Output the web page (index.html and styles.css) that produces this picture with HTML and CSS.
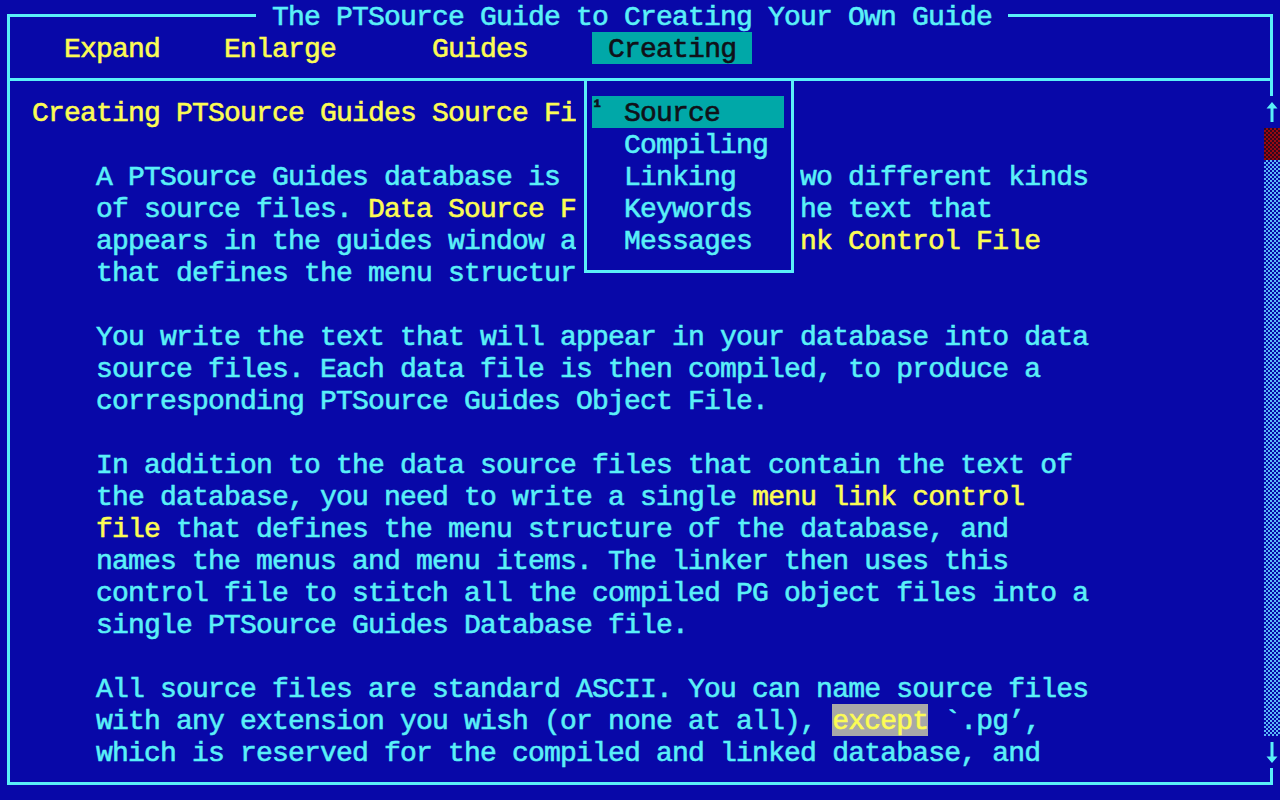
FILE: index.html
```html
<!DOCTYPE html>
<html>
<head>
<meta charset="utf-8">
<link rel="stylesheet" href="styles.css">
</head>
<body>
<div class="screen">
  <div class="frame">
    <div class="menubar"><div class="menuline"> Expand    Enlarge      Guides    <span class="menu-hl"> <span class="hl-text">Creating</span> </span></div></div>
    <div class="body">
      <div class="line heading">Creating PTSource Guides Source Fi</div>
      <div class="line"></div>
      <div class="line para split"><span class="seg">A PTSource Guides database is </span><span class="gap"></span><span class="seg">wo different kinds</span></div>
      <div class="line para split"><span class="seg">of source files. <span class="y">Data Source F</span></span><span class="gap"></span><span class="seg">he text that</span></div>
      <div class="line para split"><span class="seg">appears in the guides window a</span><span class="gap"></span><span class="seg y">nk Control File</span></div>
      <div class="line para">that defines the menu structur</div>
      <div class="line"></div>
      <div class="line para">You write the text that will appear in your database into data</div>
      <div class="line para">source files. Each data file is then compiled, to produce a</div>
      <div class="line para">corresponding PTSource Guides Object File.</div>
      <div class="line"></div>
      <div class="line para">In addition to the data source files that contain the text of</div>
      <div class="line para">the database, you need to write a single <span class="y">menu link control</span></div>
      <div class="line para"><span class="y">file</span> that defines the menu structure of the database, and</div>
      <div class="line para">names the menus and menu items. The linker then uses this</div>
      <div class="line para">control file to stitch all the compiled PG object files into a</div>
      <div class="line para">single PTSource Guides Database file.</div>
      <div class="line"></div>
      <div class="line para">All source files are standard ASCII. You can name source files</div>
      <div class="line para">with any extension you wish (or none at all), <span class="mark">except</span> `.pg’,</div>
      <div class="line para">which is reserved for the compiled and linked database, and</div>
    </div>
  </div>

  <div class="title"> The PTSource Guide to Creating Your Own Guide </div>

  <div class="dropdown">
    <div class="dd-box">
      <div class="dd-item active"><span class="sup">¹</span> Source</div>
      <div class="dd-item">  Compiling</div>
      <div class="dd-item">  Linking</div>
      <div class="dd-item">  Keywords</div>
      <div class="dd-item">  Messages</div>
    </div>
  </div>

  <div class="scrollbar">
    <div class="sb-cell">
      <svg width="16" height="32" viewBox="0 0 16 32"><path d="M8 6 L13.5 12.5 L9.5 12.5 L9.5 26 L6.5 26 L6.5 12.5 L2.5 12.5 Z" fill="#5af0f8"/></svg>
    </div>
    <div class="sb-thumb"></div>
    <div class="sb-track"></div>
    <div class="sb-cell">
      <svg width="16" height="32" viewBox="0 0 16 32"><path d="M8 27 L13.5 20.5 L9.5 20.5 L9.5 6 L6.5 6 L6.5 20.5 L2.5 20.5 Z" fill="#5af0f8"/></svg>
    </div>
  </div>
</div>
</body>
</html>
```

FILE: styles.css
```css
html, body {
  margin: 0;
  padding: 0;
  background: #0808a8;
}

.screen {
  position: relative;
  width: 1280px;
  height: 800px;
  overflow: hidden;
  background: #0808a8;
  color: #5af0f8;
  font-family: "Liberation Mono", "DejaVu Sans Mono", monospace;
  font-size: 28px;
  letter-spacing: -0.8px;
  line-height: 36px;
  -webkit-text-stroke: 0.6px currentColor;
}

.frame {
  box-sizing: border-box;
  margin: 0 0 0 7px;
  position: relative;
  top: 14px;
  width: 1266px;
  height: 771px;
  border: 3px solid #5af0f8;
}

.menubar {
  box-sizing: border-box;
  height: 64px;
  padding: 15px 0 0 38px;
  border-bottom: 3px solid #5af0f8;
  color: #fcfc54;
}

.menuline,
.line,
.title,
.dd-item {
  white-space: pre;
}

.menuline {
  height: 32px;
}

.menu-hl {
  display: inline-block;
  vertical-align: top;
  height: 32px;
  background: #00a8a8;
}

.hl-text {
  color: #101018;
}

.body {
  padding: 15px 0 0 22px;
}

.line {
  height: 32px;
}

.split {
  display: flex;
}

.seg {
  white-space: pre;
}

.gap {
  flex: none;
  width: 224px;
}

.heading {
  color: #fcfc54;
}

.para {
  padding-left: 64px;
}

.y {
  color: #fcfc54;
}

.mark {
  display: inline-block;
  vertical-align: top;
  height: 32px;
  background: #a8a8a8;
  color: #fcfc54;
}

.title {
  position: absolute;
  left: 256px;
  top: 0;
  height: 32px;
  background: #0808a8;
  color: #5af0f8;
}

.dropdown {
  position: absolute;
  left: 576px;
  top: 81px;
  width: 224px;
  height: 207px;
  background: #0808a8;
}

.dd-box {
  box-sizing: border-box;
  margin: 0 0 0 8px;
  width: 210px;
  height: 192px;
  border: 3px solid #5af0f8;
  border-top: none;
  padding: 15px 0 0 5px;
}

.dd-item {
  width: 192px;
  height: 32px;
}

.dd-item.active {
  background: #00a8a8;
  color: #101018;
}

.sup {
  font-size: 18px;
  letter-spacing: 0;
  display: inline-block;
  width: 16px;
  vertical-align: top;
  line-height: 22px;
  font-weight: bold;
}

.scrollbar {
  position: absolute;
  left: 1264px;
  top: 96px;
  width: 16px;
  height: 672px;
  background: #0808a8;
  display: flex;
  flex-direction: column;
}

.sb-cell {
  height: 32px;
}

.sb-cell svg {
  display: block;
}

.sb-thumb {
  height: 32px;
  background-image: repeating-conic-gradient(#9a0810 0 25%, #300820 0 50%);
  background-size: 4px 4px;
}

.sb-track {
  flex: 1;
  background-image: repeating-conic-gradient(#5ab8f8 0 25%, #0808a8 0 50%);
  background-size: 4px 4px;
}
```
